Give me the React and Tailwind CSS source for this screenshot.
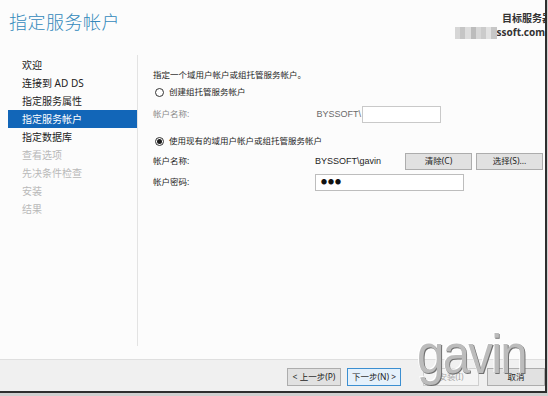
const navItems = [
  { label: "欢迎", state: "done" },
  { label: "连接到 AD DS", state: "done" },
  { label: "指定服务属性", state: "done" },
  { label: "指定服务帐户", state: "active" },
  { label: "指定数据库", state: "done" },
  { label: "查看选项", state: "off" },
  { label: "先决条件检查", state: "off" },
  { label: "安装", state: "off" },
  { label: "结果", state: "off" },
]

const mosaic = ["#d2d2d2", "#c0c0c0", "#dadada", "#b6b6b6", "#d4d4d4", "#c6c6c6", "#e0e0e0", "#c2c2c2"]

const Radio = ({ checked }) => (
  <span className="w-[9px] h-[9px] rounded-full border border-[#333] bg-white flex items-center justify-center shrink-0">
    {checked && <span className="w-[5px] h-[5px] rounded-full bg-[#1b1b1b]" />}
  </span>
)

const App = () => {
  return (
    <div
      className="w-[548px] h-[396px] bg-[#cfcfcf] overflow-hidden"
      style={{ fontFamily: '"Noto Sans", "Noto Sans CJK SC", sans-serif' }}
    >
      <div className="w-[547px] h-[393px] bg-[#fcfcfc] border-r-2 border-b-2 border-[#2e2e2e] flex flex-col overflow-hidden relative">
        {/* header */}
        <div className="h-[55px] flex shrink-0">
          <div className="pl-[9px] pt-[10px] text-[18px] leading-[24px] font-light text-[#3389bb] tracking-[0.5px]">
            指定服务帐户
          </div>
          <div className="ml-auto pt-[11px] w-[90px] text-[10px] leading-[14px] font-bold text-[#333]">
            <div className="pl-[47px] whitespace-nowrap">目标服务器</div>
            <div className="flex items-center">
              <div className="flex h-[12px] w-[52px] mt-[1px] opacity-90">
                {mosaic.map((c, i) => (
                  <span key={i} className="flex-1 h-full" style={{ background: c }} />
                ))}
              </div>
              <span className="whitespace-nowrap">ssoft.com</span>
            </div>
          </div>
        </div>

        {/* body */}
        <div className="flex h-[291px] shrink-0">
          <div className="w-[138px] border-r border-[#e3e3e3] pl-[8px] pt-[1px] shrink-0">
            {navItems.map((item) => (
              <div
                key={item.label}
                className={
                  "h-[18px] pl-[14px] flex items-center text-[10px] whitespace-nowrap " +
                  (item.state === "active"
                    ? "bg-[#1266b8] text-white"
                    : item.state === "off"
                    ? "text-[#b9b9b9]"
                    : "text-[#222]")
                }
              >
                {item.label}
              </div>
            ))}
          </div>

          <div className="flex-1 pl-[15px] pt-[13px] text-[8.5px] text-[#1e1e1e]">
            <div className="h-[14px] flex items-center">指定一个域用户帐户或组托管服务帐户。</div>
            <div className="h-[16px] flex items-center gap-[5px] pl-[2px] mt-[2px]">
              <Radio />
              <span>创建组托管服务帐户</span>
            </div>
            <div className="h-[17px] flex items-center mt-[6px] text-[#8a8a8a]">
              <span className="w-[162px]">帐户名称:</span>
              <span className="w-[46px] text-right text-[9px] text-[#6a6a6a]" style={{ fontFamily: '"Liberation Sans", sans-serif' }}>
                BYSSOFT\
              </span>
              <div className="w-[79px] h-[17px] border border-[#c9c9c9] bg-white ml-[1px]" />
            </div>
            <div className="h-[16px] flex items-center gap-[5px] pl-[2px] mt-[10px]">
              <Radio checked />
              <span>使用现有的域用户帐户或组托管服务帐户</span>
            </div>
            <div className="h-[17px] flex items-center mt-[4px]">
              <span className="w-[162px]">帐户名称:</span>
              <span className="w-[90px] text-[9px] text-[#1e1e1e]" style={{ fontFamily: '"Liberation Sans", sans-serif' }}>
                BYSSOFT\gavin
              </span>
              <button className="w-[67px] h-[17px] bg-[#e1e1e1] border border-[#adadad] text-[8.5px] text-[#1e1e1e]">
                清除(C)
              </button>
              <button className="w-[67px] h-[17px] ml-[4px] bg-[#e1e1e1] border border-[#adadad] text-[8.5px] text-[#1e1e1e]">
                选择(S)...
              </button>
            </div>
            <div className="h-[17px] flex items-center mt-[4px]">
              <span className="w-[162px]">帐户密码:</span>
              <div className="w-[149px] h-[17px] border border-[#bdbdbd] bg-white flex items-center pl-[5px] text-[6px] tracking-[1px] text-[#111]">
                ●●●
              </div>
            </div>
          </div>
        </div>

        {/* footer */}
        <div className="mt-[13px] flex-1 bg-[#f0f0f0] border-t border-[#dfdfdf] flex items-start pt-[8px] text-[8.5px]">
          <button className="ml-[287px] w-[56px] h-[18px] bg-[#e1e1e1] border border-[#adadad] text-[#1e1e1e]">
            &lt; 上一步(P)
          </button>
          <button className="ml-[6px] w-[56px] h-[18px] bg-[#e5f1fb] border border-[#3c8fd1] text-[#1e1e1e]">
            下一步(N) &gt;
          </button>
          <button className="ml-[22px] w-[58px] h-[18px] bg-[#f4f4f4] border border-[#cfcfcf] text-[#a8a8a8]">
            安装(I)
          </button>
          <button className="ml-[8px] w-[58px] h-[18px] bg-[#e1e1e1] border border-[#adadad] text-[#1e1e1e] shrink-0">
            取消
          </button>
        </div>

        {/* watermark */}
        <div
          className="absolute left-[417px] top-[322px] text-[56px] leading-[64px] text-[#bcbcbc] tracking-[-2px] scale-x-[0.88] origin-left pointer-events-none"
          style={{ fontFamily: '"Liberation Sans", sans-serif', textShadow: "1px 1px 0 #707070, -1px -1px 0 #ffffff" }}
        >
          gavin
        </div>
      </div>
    </div>
  )
}

export default App
